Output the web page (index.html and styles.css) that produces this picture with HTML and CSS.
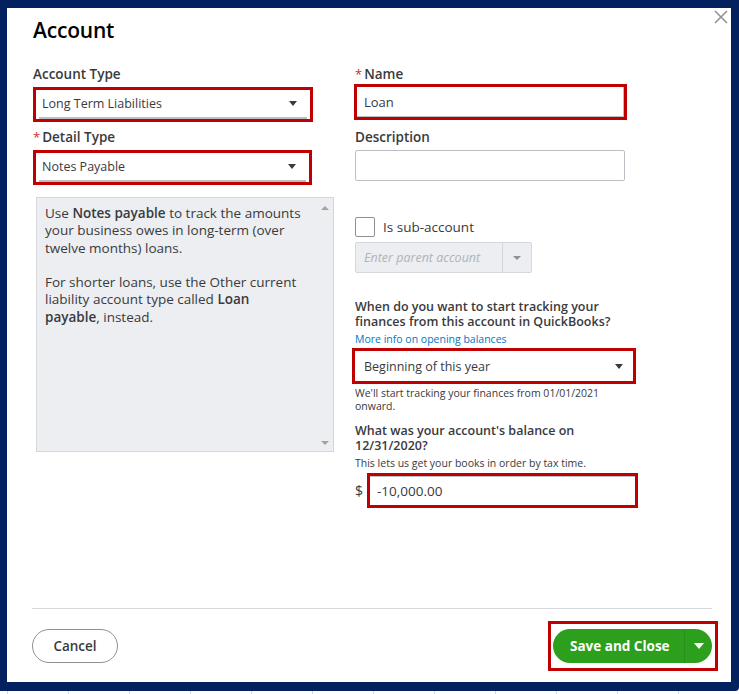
FILE: index.html
```html
<!DOCTYPE html>
<html>
<head>
<meta charset="utf-8">
<link rel="stylesheet" href="styles.css">
</head>
<body>
<div class="frame">
  <div class="modal">
    <button class="close" aria-label="Close">
      <svg width="14" height="14" viewBox="0 0 14 14"><path d="M1 1L13 13M13 1L1 13" stroke="#8d9096" stroke-width="1.5" fill="none"/></svg>
    </button>
    <h1 class="title">Account</h1>
    <div class="cols">
      <div class="col left">
        <div class="label">Account Type</div>
        <div class="hl hl-at">
          <div class="select"><span>Long Term Liabilities</span><i class="caret"></i></div>
        </div>
        <div class="label lbl-detail"><span class="req">*</span>Detail Type</div>
        <div class="hl hl-dt">
          <div class="select"><span>Notes Payable</span><i class="caret"></i></div>
        </div>
        <div class="desc">
          <div class="desc-text">
            <p>Use <b>Notes payable</b> to track the amounts your business owes in long-term (over twelve months) loans.</p>
            <p>For shorter loans, use the Other current liability account type called <b>Loan payable</b>, instead.</p>
          </div>
          <div class="scroll">
            <i class="sc-up"></i>
            <i class="sc-down"></i>
          </div>
        </div>
      </div>
      <div class="col right">
        <div class="label"><span class="req">*</span>Name</div>
        <div class="hl hl-name">
          <div class="input">Loan</div>
        </div>
        <div class="label lbl-desc">Description</div>
        <div class="input plain"></div>
        <div class="check-row">
          <span class="checkbox"></span>
          <span class="check-label">Is sub-account</span>
        </div>
        <div class="combo">
          <span class="ph">Enter parent account</span>
          <span class="combo-btn"><i class="caret light"></i></span>
        </div>
        <div class="q q1">When do you want to start tracking your finances from this account in QuickBooks?</div>
        <a class="link">More info on opening balances</a>
        <div class="hl hl-begin">
          <div class="select tall"><span>Beginning of this year</span><i class="caret"></i></div>
        </div>
        <div class="help h1">We'll start tracking your finances from 01/01/2021 onward.</div>
        <div class="q q2">What was your account's balance on 12/31/2020?</div>
        <div class="help h2">This lets us get your books in order by tax time.</div>
        <div class="amount-row">
          <span class="dollar">$</span>
          <div class="hl hl-amt">
            <div class="input amt">-10,000.00</div>
          </div>
        </div>
      </div>
    </div>
    <div class="footer">
      <button class="btn-cancel">Cancel</button>
      <div class="hl hl-save">
        <div class="btn-save">
          <span class="save-text">Save and Close</span>
          <span class="save-arrow"><i class="caret white"></i></span>
        </div>
      </div>
    </div>
  </div>
</div>
<div class="ticks">
  <i></i><i></i><i></i><i></i><i></i><i></i><i></i><i></i><i></i><i></i><i></i><i></i>
</div>
</body>
</html>
```
FILE: styles.css
```css
* { box-sizing: border-box; }
html, body { margin: 0; padding: 0; background: #fff; }
body {
  width: 739px;
  height: 694px;
  overflow: hidden;
  font-family: "Open Sans", "Liberation Sans", sans-serif;
  color: #393a3d;
}
.frame {
  width: 739px;
  height: 691px;
  border-style: solid;
  border-color: #03205f;
  border-width: 8px 8px 9px 7px;
  border-radius: 0 0 4px 0;
}
.modal {
  position: relative;
  width: 100%;
  height: 100%;
  background: #fff;
  display: flex;
  flex-direction: column;
  padding: 7px 19px 0 25px;
}
.close {
  position: absolute;
  top: 0;
  right: 1px;
  width: 18px;
  height: 18px;
  padding: 2px;
  border: 0;
  background: none;
  display: flex;
  align-items: center;
  justify-content: center;
}
.title {
  margin: 0 0 0 1px;
  font-size: 21px;
  line-height: 30px;
  font-weight: 600;
  color: #000;
  letter-spacing: -0.2px;
}
.cols {
  flex: 1;
  display: flex;
  margin-top: 20px;
  margin-left: 1px;
}
.col { display: flex; flex-direction: column; }
.left { width: 301px; }
.right { width: 283px; margin-left: 21px; }
.label {
  font-size: 13.5px;
  line-height: 18px;
  font-weight: 600;
  color: #393a3d;
}
.req { color: #d52b1e; font-weight: 400; margin-right: 2px; font-size: 13px; }
.hl { border: 3px solid #c00000; background: #fff; }
.hl-at { width: 280px; height: 35px; margin-top: 4px; }
.lbl-detail { margin-top: 6px; }
.hl-dt { width: 279px; height: 35px; margin-top: 4px; }
.select {
  height: 100%;
  display: flex;
  align-items: center;
  justify-content: space-between;
  padding: 0 10px 0 3px;
  font-size: 12.5px;
  border-bottom: 2px solid #babec5;
  margin: 0 3px;
}
.select.tall { border-bottom: 0; margin: 0; padding-left: 9px; padding-right: 10px; }
.caret {
  display: block;
  width: 0;
  height: 0;
  border-left: 4.5px solid transparent;
  border-right: 4.5px solid transparent;
  border-top: 5px solid #393a3d;
}
.caret.light { border-top-color: #8d9096; border-left-width: 4px; border-right-width: 4px; border-top-width: 4px; }
.caret.white { border-top-color: #fff; border-left-width: 5px; border-right-width: 5px; border-top-width: 6px; }
.desc {
  margin-top: 12px;
  margin-left: 3px;
  width: 298px;
  height: 255px;
  background: #eceef1;
  border: 1px solid #d4d7dc;
  display: flex;
}
.desc-text {
  flex: 1;
  padding: 7px 12px 0 8px;
  font-size: 13.5px;
  line-height: 17.3px;
  color: #393a3d;
}
.desc-text p { margin: 0 0 17.3px 0; }
.desc-text b { font-weight: 600; color: #393a3d; }
.scroll {
  width: 17px;
  display: flex;
  flex-direction: column;
  justify-content: space-between;
  align-items: center;
  padding: 8px 0 6px;
}
.sc-up, .sc-down {
  display: block;
  width: 0; height: 0;
  border-left: 4px solid transparent;
  border-right: 4px solid transparent;
}
.sc-up { border-bottom: 4px solid #a3a3a3; }
.sc-down { border-top: 4px solid #a3a3a3; }
.hl-name { width: 273px; height: 36px; margin-top: 1px; margin-left: -1px; }
.input {
  height: 100%;
  display: flex;
  align-items: center;
  padding-left: 7px;
  font-size: 13px;
  border-right: 1px solid #babec5;
  border-bottom: 1px solid #babec5;
}
.input.plain {
  width: 270px;
  height: 31px;
  margin-top: 4px;
  border: 1px solid #babec5;
  border-radius: 2px;
}
.lbl-desc { margin-top: 8px; }
.check-row {
  margin-top: 36px;
  display: flex;
  align-items: center;
  height: 20px;
}
.checkbox {
  width: 20px;
  height: 20px;
  border: 1px solid #8d9096;
  border-radius: 2px;
}
.check-label { margin-left: 8px; font-size: 13.5px; }
.combo {
  margin-top: 5px;
  width: 177px;
  height: 31px;
  background: #eceef1;
  border: 1px solid #d4d7dc;
  border-radius: 2px;
  display: flex;
  align-items: center;
}
.ph {
  flex: 1;
  padding-left: 8px;
  font-style: italic;
  font-size: 12.5px;
  color: #b0b3b8;
}
.combo-btn {
  width: 29px;
  height: 100%;
  border-left: 1px solid #d4d7dc;
  display: flex;
  align-items: center;
  justify-content: center;
}
.q {
  font-size: 12.5px;
  line-height: 15px;
  font-weight: 600;
  color: #393a3d;
  width: 270px;
}
.q1 { margin-top: 26px; }
.link {
  display: block;
  margin-top: 3px;
  font-size: 10.5px;
  line-height: 14px;
  color: #0077c5;
}
.hl-begin { width: 284px; height: 36px; margin-top: 2px; margin-left: -3px; }
.help {
  font-size: 10.5px;
  line-height: 13px;
  color: #393a3d;
  width: 260px;
}
.h1 { margin-top: 3px; }
.q2 { margin-top: 10px; }
.h2 { margin-top: 4px; width: 300px; }
.amount-row {
  margin-top: 3px;
  display: flex;
  align-items: center;
}
.dollar { font-size: 14px; width: 12px; }
.hl-amt { width: 271px; height: 35px; }
.input.amt { padding-left: 7px; font-size: 13.5px; border: 0; border-top: 1px solid #babec5; }
.footer {
  flex: none;
  border-top: 1px solid #d4d7dc;
  padding-top: 12px;
  display: flex;
  justify-content: space-between;
  align-items: flex-start;
  height: 74px;
}
.btn-cancel {
  margin-top: 8px;
  width: 86px;
  height: 34px;
  border: 1px solid #8d9096;
  border-radius: 17px;
  background: #fff;
  font-family: inherit;
  font-size: 13.5px;
  font-weight: 600;
  color: #393a3d;
  padding: 0;
}
.hl-save {
  width: 170px;
  height: 50px;
  margin-right: -6px;
  padding: 5px 0 0 2px;
}
.btn-save {
  width: 159px;
  height: 34px;
  background: #2ca01c;
  border-radius: 17px;
  display: flex;
  align-items: center;
}
.save-text {
  flex: 1;
  padding-left: 17px;
  color: #fff;
  font-size: 13.5px;
  font-weight: 700;
  border-right: 1px solid #28901a;
  height: 100%;
  display: flex;
  align-items: center;
}
.save-arrow {
  width: 27px;
  height: 100%;
  display: flex;
  align-items: center;
  justify-content: center;
}
.ticks {
  display: flex;
  height: 3px;
  padding-left: 7px;
}
.ticks i {
  display: block;
  width: 64px;
  height: 3px;
  border-left: 1px solid #d4d7dc;
}
```
